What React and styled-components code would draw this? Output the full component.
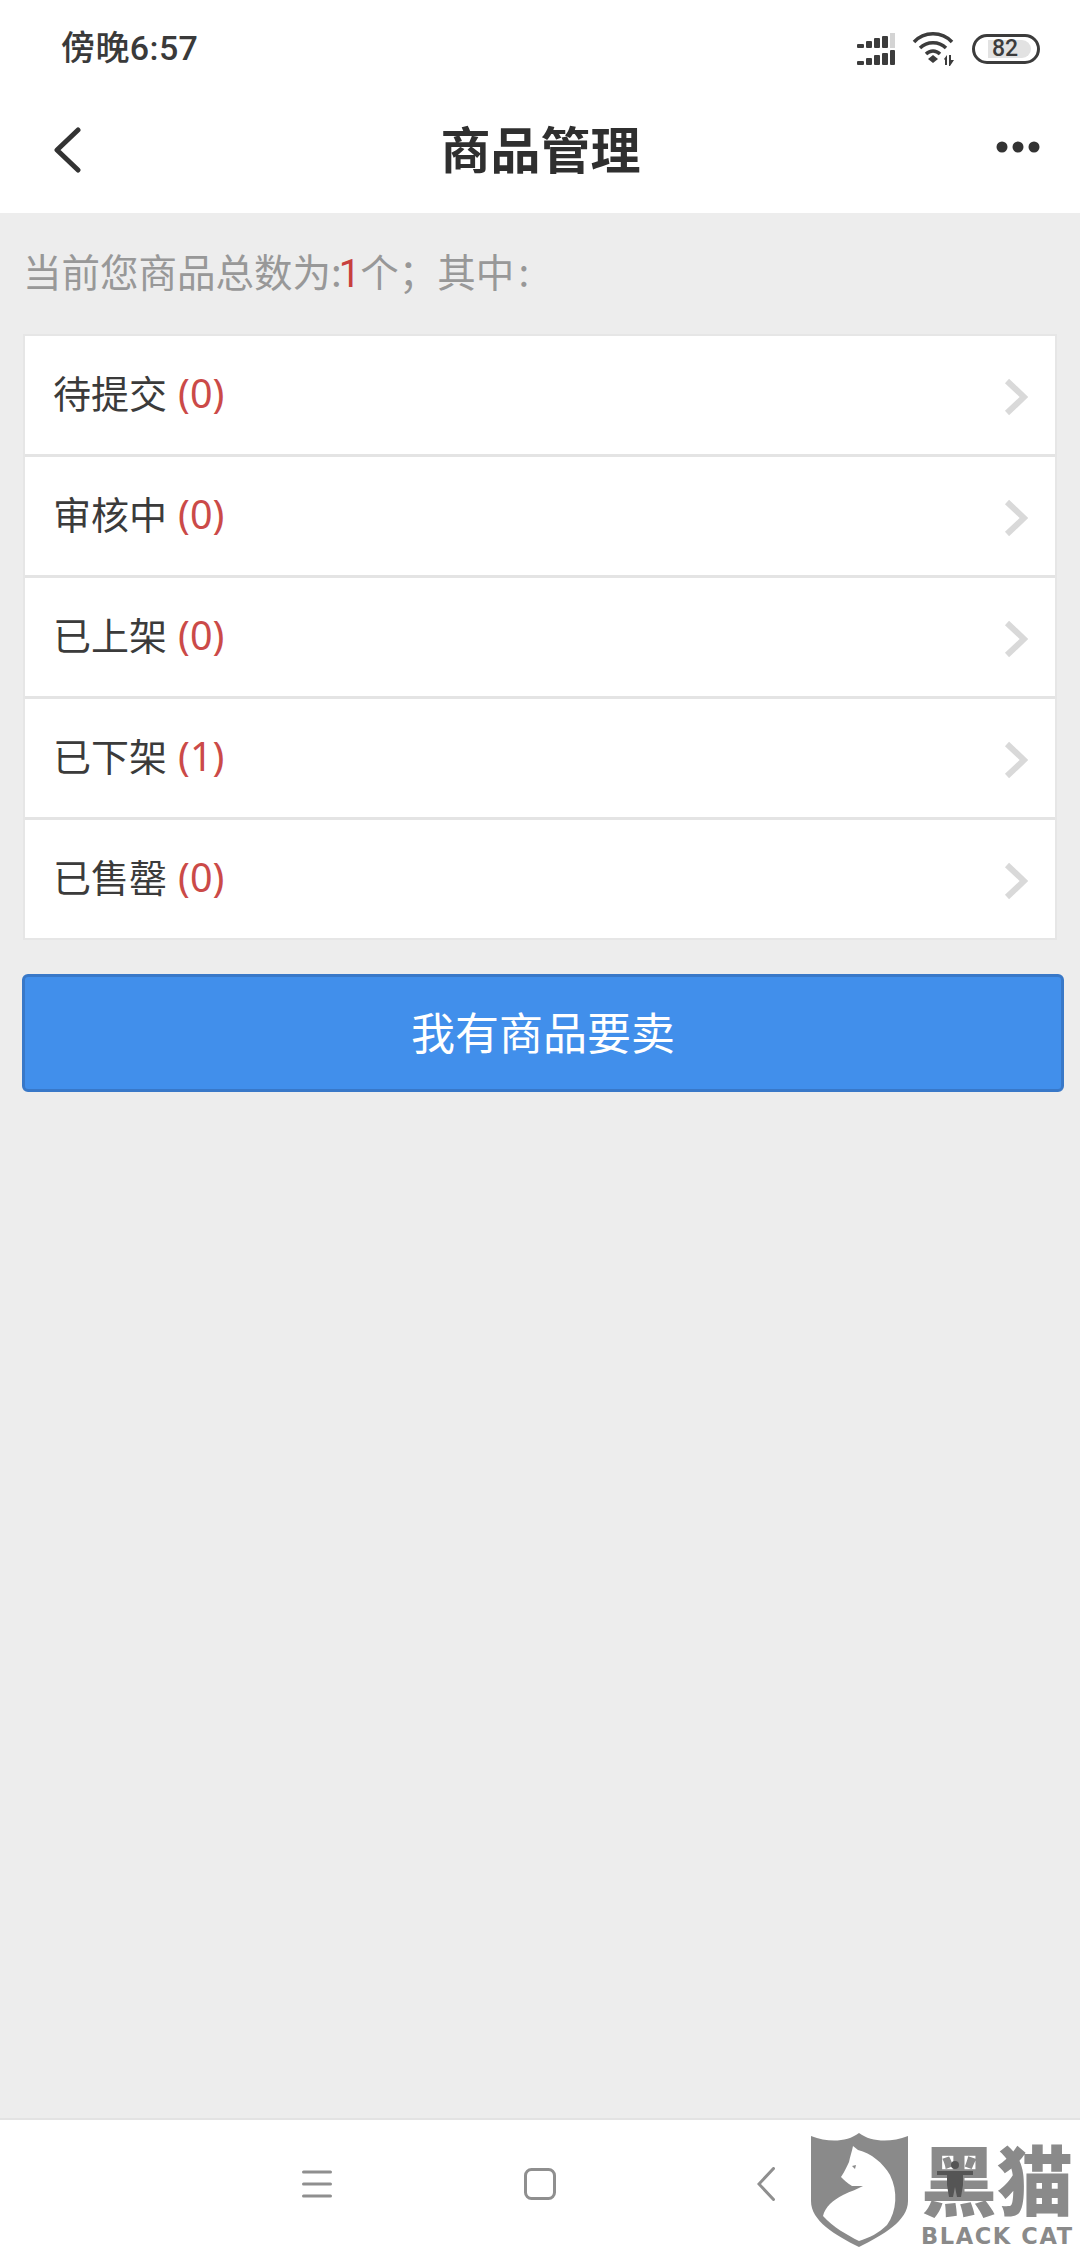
import React from 'react'
import styled, { createGlobalStyle } from 'styled-components'

const GlobalStyle = createGlobalStyle`
  html, body {
    margin: 0;
    padding: 0;
    background: #ededed;
  }
  * {
    box-sizing: border-box;
  }
`

const FONT = `"Noto Sans CJK SC", "Noto Sans", sans-serif`

const Page = styled.div`
  position: relative;
  width: 1080px;
  height: 2248px;
  display: flex;
  flex-direction: column;
  overflow: hidden;
  background: #ededed;
  font-family: ${FONT};
`

const StatusBar = styled.div`
  height: 72px;
  flex: none;
  display: flex;
  align-items: flex-end;
  justify-content: space-between;
  padding: 0 40px 0 61px;
  background: #fff;
`

const Time = styled.span`
  font-family: Roboto, ${FONT};
  font-size: 34px;
  line-height: 48px;
  font-weight: 500;
  letter-spacing: 0.4px;
  color: #3a3a3a;
`

const StatusIcons = styled.div`
  display: flex;
  align-items: center;
  gap: 16px;
  height: 34px;
  margin-bottom: 6px;
`

const Battery = styled.div`
  width: 68px;
  height: 30px;
  padding: 3px 6px 3px 13px;
  border: 3px solid #3c3c3c;
  border-radius: 15px;
  display: flex;
`

const BatteryLevel = styled.div`
  flex: 1;
  background: #e2e2e2;
  border-radius: 0 9px 9px 0;
  font-family: Roboto, sans-serif;
  font-size: 23px;
  line-height: 18px;
  font-weight: 500;
  color: #3c3c3c;
  padding-left: 4px;
`

const Header = styled.header`
  height: 141px;
  flex: none;
  display: flex;
  align-items: center;
  justify-content: space-between;
  padding: 8px 40px 0 53px;
  background: #fff;
`

const Title = styled.h1`
  margin: 0 0 0 4px;
  font-size: 50px;
  font-weight: 700;
  line-height: 70px;
  color: #2f2f2f;
`

const Main = styled.main`
  flex: 1;
  padding: 0 15px 0 22px;
`

const Summary = styled.p`
  margin: 0;
  height: 121px;
  padding: 31px 0 0 1px;
  font-size: 38.5px;
  line-height: 52px;
  color: #989898;
`

const Red = styled.span`
  margin-left: -3px;
  color: #c8403e;
  font-family: Roboto, ${FONT};
`

const Colon = styled.span`
  margin-left: 4px;
`

const List = styled.ul`
  list-style: none;
  margin: 0 8px 0 1px;
  padding: 0;
  border: 2px solid #e6e6e6;
  background: #fff;
`

const Row = styled.li`
  display: flex;
  align-items: center;
  justify-content: space-between;
  padding: 0 27px 2px 28px;
  font-size: 38px;
  color: #3b3b3b;
  border-top: ${(p) => (p.$first ? 'none' : '3px solid #e4e4e4')};
  height: ${(p) => (p.$first ? '118px' : '121px')};
`

const Label = styled.span`
  line-height: 52px;
  margin-bottom: 3px;
`

const Count = styled.span`
  margin-left: 11px;
  color: #cb4a48;
  font-size: 39.5px;
  font-family: "Noto Sans", ${FONT};
`

const Chevron = styled.svg`
  margin-top: 5px;
`

const SellButton = styled.button`
  display: block;
  width: 1042px;
  height: 118px;
  margin-top: 34px;
  border: 3px solid #3878c8;
  border-radius: 6px;
  background: #418feb;
  color: #fff;
  font-family: ${FONT};
  font-size: 44px;
  line-height: 60px;
  padding: 0 0 5px;
`

const NavBar = styled.nav`
  height: 130px;
  flex: none;
  display: flex;
  align-items: center;
  padding: 0 0 0 302px;
  gap: 192px;
  background: #fff;
  border-top: 2px solid #e3e3e3;
`

const NavBack = styled.svg`
  margin-left: 9px;
`

const Back = styled.svg`
  margin-top: 6px;
`

const Watermark = styled.div`
  position: absolute;
  left: 811px;
  top: 2133px;
  width: 269px;
  height: 115px;
  display: flex;
  gap: 13px;
  color: #8a8a8a;
`

const Brand = styled.div`
  position: relative;
  width: 152px;
  flex: none;
`

const BrandName = styled.div`
  height: 91px;
  font-size: 76px;
  line-height: 88px;
  font-weight: 900;
  white-space: nowrap;
`

const BrandLatin = styled.div`
  font-family: "DejaVu Sans", sans-serif;
  font-size: 22.5px;
  line-height: 24px;
  font-weight: 700;
  letter-spacing: 1.6px;
  white-space: nowrap;
`

const Figure = styled.svg`
  position: absolute;
  left: 16px;
  top: 26px;
`

const SignalIcon = () => (
  <svg width="42" height="32" viewBox="0 0 42 32">
    <g transform="translate(2 0)">
      <g fill="#3c3c3c">
        <rect x="1" y="11" width="7" height="4" rx="1" />
        <rect x="10" y="8" width="6" height="7" rx="1" />
        <rect x="18" y="5" width="6" height="10" rx="1" />
        <rect x="26" y="3" width="6" height="12" rx="1" />
        <rect x="1" y="28" width="7" height="4" rx="1" />
        <rect x="10" y="25" width="6" height="7" rx="1" />
        <rect x="18" y="22" width="6" height="10" rx="1" />
        <rect x="26" y="20" width="6" height="12" rx="1" />
        <rect x="34" y="17" width="5" height="15" rx="1" />
      </g>
      <rect x="34" y="0" width="5" height="15" fill="#d4d4d4" />
    </g>
  </svg>
)

const WifiIcon = () => (
  <svg width="44" height="34" viewBox="0 0 44 34">
    <g fill="none" stroke="#3c3c3c" strokeWidth="3.4">
      <path d="M2 10 C 12 -1, 30 -1, 40 10" />
      <path d="M8 16 C 15 9, 27 9, 34 16" />
      <path d="M14 22 C 18 18, 24 18, 28 22" />
    </g>
    <path d="M16 27 L21 23 L26 27 L21 31 Z" fill="#3c3c3c" />
    <path d="M32 27 L35 23 V33 H33 V28 Z M37 23 H39 V28 L42 28 L38 34 H37 Z" fill="#3c3c3c" />
  </svg>
)

const BackIcon = () => (
  <Back width="28" height="46" viewBox="0 0 28 46">
    <path d="M25 3 L4 23 L25 43" fill="none" stroke="#333" strokeWidth="5" strokeLinecap="round" strokeLinejoin="round" />
  </Back>
)

const MoreIcon = () => (
  <svg width="44" height="12" viewBox="0 0 44 12" fill="#333">
    <circle cx="6" cy="6" r="5.5" />
    <circle cx="22" cy="6" r="5.5" />
    <circle cx="38" cy="6" r="5.5" />
  </svg>
)

const ChevronIcon = () => (
  <Chevron width="24" height="38" viewBox="0 0 24 38">
    <path d="M3 3 L20 19 L3 35" fill="none" stroke="#d9d9d9" strokeWidth="6" />
  </Chevron>
)

const MenuIcon = () => (
  <svg width="30" height="28" viewBox="0 0 30 28">
    <path d="M1.5 2 H28.5 M1.5 14 H28.5 M1.5 26 H28.5" stroke="#8f8f8f" strokeWidth="3" strokeLinecap="round" />
  </svg>
)

const HomeIcon = () => (
  <svg width="32" height="32" viewBox="0 0 32 32">
    <rect x="1.5" y="1.5" width="29" height="29" rx="6" fill="none" stroke="#8f8f8f" strokeWidth="3" />
  </svg>
)

const NavBackIcon = () => (
  <NavBack width="18" height="34" viewBox="0 0 18 34">
    <path d="M16.5 1.5 L2 17 L16.5 32.5" fill="none" stroke="#8f8f8f" strokeWidth="3" strokeLinecap="round" />
  </NavBack>
)

const ShieldLogo = () => (
  <svg width="97" height="115" viewBox="0 0 97 115" style={{ flex: 'none' }}>
    <path d="M0 3 C 18 10, 36 9, 48 0 C 60 9, 79 10, 97 3 V 68 C 97 88, 72 102, 48 114 C 24 102, 0 88, 0 68 Z" fill="#8a8a8a" />
    <path
      d="M42 13 L47 17 C 60 20, 72 30, 79 42 C 87 58, 86 78, 76 92 C 68 100, 58 105, 48 108 C 36 102, 22 94, 12 83 C 14 74, 22 67, 32 62 C 40 58, 47 56, 52 53 L41 53 C 36 50, 33 47, 30 44 C 34 38, 36 33, 38 29 C 39 24, 41 18, 42 13 Z"
      fill="#fff"
    />
    <path d="M41 33 L45 32 L44 36 Z" fill="#8a8a8a" />
  </svg>
)

const rows = [
  { name: '待提交', count: 0 },
  { name: '审核中', count: 0 },
  { name: '已上架', count: 0 },
  { name: '已下架', count: 1 },
  { name: '已售罄', count: 0 },
]

const App = () => {
  return (
    <Page>
      <GlobalStyle />
      <StatusBar>
        <Time>傍晚6:57</Time>
        <StatusIcons>
          <SignalIcon />
          <WifiIcon />
          <Battery>
            <BatteryLevel>82</BatteryLevel>
          </Battery>
        </StatusIcons>
      </StatusBar>
      <Header>
        <BackIcon />
        <Title>商品管理</Title>
        <MoreIcon />
      </Header>
      <Main>
        <Summary>
          当前您商品总数为:<Red>1</Red>个；其中<Colon>:</Colon>
        </Summary>
        <List>
          {rows.map((row, i) => (
            <Row key={row.name} $first={i === 0}>
              <Label>
                {row.name}
                <Count>({row.count})</Count>
              </Label>
              <ChevronIcon />
            </Row>
          ))}
        </List>
        <SellButton>我有商品要卖</SellButton>
      </Main>
      <NavBar>
        <MenuIcon />
        <HomeIcon />
        <NavBackIcon />
      </NavBar>
      <Watermark>
        <ShieldLogo />
        <Brand>
          <BrandName>黑猫</BrandName>
          <BrandLatin>BLACK CAT</BrandLatin>
          <Figure width="36" height="38" viewBox="0 0 36 38">
            <circle cx="18" cy="6" r="4" fill="#555" />
            <path d="M0 12 H36 V16 H26 V26 L24 38 H20 L18 28 L16 38 H12 L10 26 V16 H0 Z" fill="#555" />
          </Figure>
        </Brand>
      </Watermark>
    </Page>
  )
}

export default App
